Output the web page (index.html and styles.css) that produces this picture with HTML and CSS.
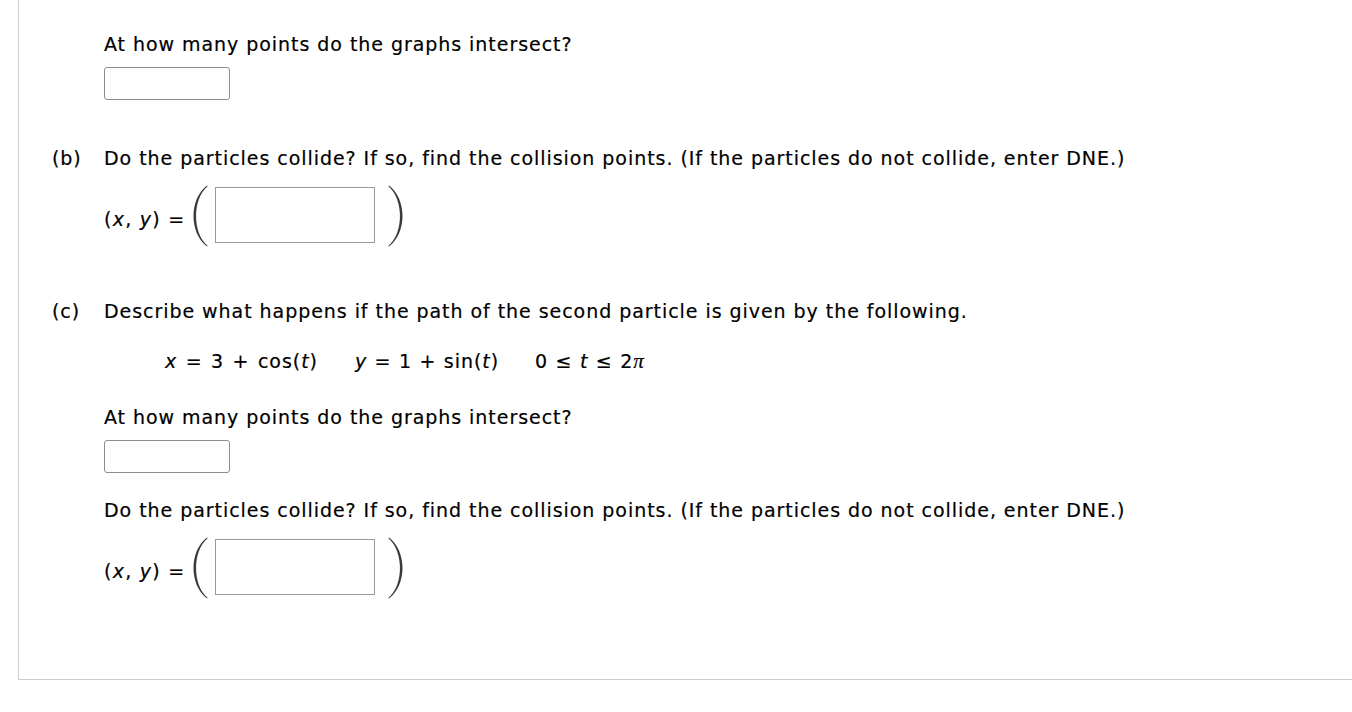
FILE: index.html
```html
<!DOCTYPE html>
<html>
<head>
<meta charset="utf-8">
<link rel="stylesheet" href="styles.css">
</head>
<body>
<div class="panel">
  <div class="part">
    <div class="label"></div>
    <div class="body">
      <div class="line first">At how many points do the graphs intersect?</div>
      <div class="ans"></div>
    </div>
  </div>

  <div class="part part-b">
    <div class="label">(b)</div>
    <div class="body">
      <div class="line">Do the particles collide? If so, find the collision points. (If the particles do not collide, enter DNE.)</div>
      <div class="pair">
        <span class="pair-label">(<i>x</i>, <i>y</i>) =</span>
        <svg class="paren lp" width="16" height="62" viewBox="0 0 16 62"><path d="M15 0.5 C-3 14 -3 48 15 61.5 L15.6 60.8 C0.2 48 0.2 14 15.6 1.2 Z"/></svg>
        <span class="box"></span>
        <svg class="paren rp" width="16" height="62" viewBox="0 0 16 62"><path d="M1 0.5 C19 14 19 48 1 61.5 L0.4 60.8 C15.8 48 15.8 14 0.4 1.2 Z"/></svg>
      </div>
    </div>
  </div>

  <div class="part part-c">
    <div class="label">(c)</div>
    <div class="body">
      <div class="line">Describe what happens if the path of the second particle is given by the following.</div>
      <div class="line eq">
        <span class="term"><i>x</i> = 3 + cos(<i>t</i>)</span>
        <span class="term t2"><i>y</i> = 1 + sin(<i>t</i>)</span>
        <span class="term t3">0 ≤ <i>t</i> ≤ 2<span class="pi">π</span></span>
      </div>
      <div class="line q2">At how many points do the graphs intersect?</div>
      <div class="ans"></div>
      <div class="line q3">Do the particles collide? If so, find the collision points. (If the particles do not collide, enter DNE.)</div>
      <div class="pair">
        <span class="pair-label">(<i>x</i>, <i>y</i>) =</span>
        <svg class="paren lp" width="16" height="62" viewBox="0 0 16 62"><path d="M15 0.5 C-3 14 -3 48 15 61.5 L15.6 60.8 C0.2 48 0.2 14 15.6 1.2 Z"/></svg>
        <span class="box"></span>
        <svg class="paren rp" width="16" height="62" viewBox="0 0 16 62"><path d="M1 0.5 C19 14 19 48 1 61.5 L0.4 60.8 C15.8 48 15.8 14 0.4 1.2 Z"/></svg>
      </div>
    </div>
  </div>
</div>
</body>
</html>
```

FILE: styles.css
```css
html, body {
  margin: 0;
  padding: 0;
  background: #fff;
}

body {
  font-family: "DejaVu Sans", Verdana, sans-serif;
  font-size: 19px;
  letter-spacing: 0.95px;
  color: #000;
  -webkit-text-stroke: 0.2px #000;
}

.panel {
  margin-left: 18px;
  height: 680px;
  box-sizing: border-box;
  border-left: 1px solid #cccccc;
  border-bottom: 1px solid #cccccc;
}

.part {
  display: flex;
}

.label {
  width: 85px;
  padding-left: 33px;
  box-sizing: border-box;
  flex: none;
  line-height: 24px;
  white-space: nowrap;
}

.body {
  display: flex;
  flex-direction: column;
  align-items: flex-start;
}

.line {
  line-height: 24px;
  white-space: nowrap;
}

.first {
  margin-top: 32px;
}

.ans {
  width: 126px;
  height: 33px;
  box-sizing: border-box;
  border: 1px solid #8c8c8c;
  border-radius: 3px;
  margin-top: 11px;
}

.part-b {
  margin-top: 46px;
}

.part-c {
  margin-top: 52px;
}

.pair {
  display: flex;
  align-items: center;
  margin-top: 15px;
  height: 62px;
}

.pair-label {
  padding-top: 5px;
  letter-spacing: 1.25px;
}

.paren {
  flex: none;
  fill: #3a3a3a;
}

.lp {
  margin-left: 7px;
  margin-right: 7px;
}

.rp {
  margin-left: 13px;
}

.box {
  width: 160px;
  height: 56px;
  box-sizing: border-box;
  border: 1px solid #999999;
  margin-bottom: 3px;
}

.eq {
  margin-top: 26px;
  margin-left: 61px;
  display: flex;
  word-spacing: 1.5px;
}

.t2 {
  margin-left: 37px;
  word-spacing: 0.5px;
}

.t3 {
  margin-left: 36px;
  word-spacing: 0.5px;
}

.pi {
  font-family: "Liberation Serif", "DejaVu Serif", serif;
  font-style: italic;
  font-size: 21px;
  letter-spacing: 0;
}

.q2 {
  margin-top: 32px;
}

.q3 {
  margin-top: 25px;
}
```
